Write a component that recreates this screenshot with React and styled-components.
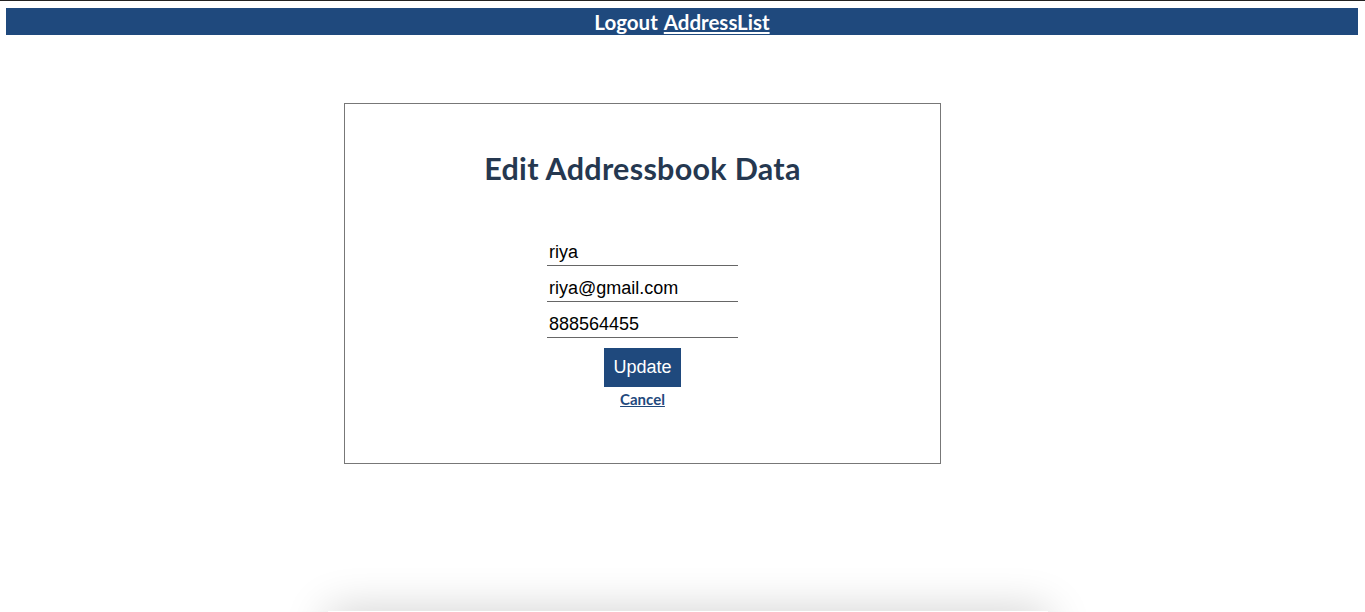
import React from 'react';
import styled, { createGlobalStyle } from 'styled-components';

const GlobalStyle = createGlobalStyle`
  html {
    border-top: 1px solid #222;
  }
  body {
    margin: 7px 7px 0 6px;
    background: #fff;
    font-family: Lato, "Open Sans", sans-serif;
    overflow: hidden;
  }
`;

const NavBar = styled.nav`
  height: 27px;
  background-color: #1f497d;
  display: flex;
  justify-content: center;
  align-items: center;
  gap: 6px;
  font-family: Lato, sans-serif;
  font-size: 20.5px;
  font-weight: 700;
  color: #fff;
`;

const NavLink = styled.a`
  color: #fff;
  text-decoration: ${({ underline }) => (underline ? 'underline' : 'none')};
  text-underline-offset: 2px;
  cursor: pointer;
`;

const Card = styled.div`
  width: 595px;
  height: 359px;
  margin: 68px 0 0 338px;
  border: 1px solid #777;
  display: flex;
  flex-direction: column;
  align-items: center;
`;

const Heading = styled.h2`
  margin: 46px 0 0;
  font-family: Lato, sans-serif;
  font-size: 30.5px;
  font-weight: 700;
  color: #253850;
  letter-spacing: 0.3px;
`;

const Form = styled.form`
  margin-top: 54px;
  display: flex;
  flex-direction: column;
  align-items: center;
`;

const Field = styled.input`
  width: 191px;
  height: 26px;
  margin-bottom: 10px;
  padding: 0 2px;
  box-sizing: border-box;
  border: none;
  border-bottom: 1px solid #666;
  font-family: "Liberation Sans", Arial, sans-serif;
  font-size: 18px;
  color: #000;
  outline: none;
  background: transparent;
`;

const UpdateButton = styled.button`
  width: 77px;
  height: 39px;
  border: none;
  background-color: #1f497d;
  color: #fff;
  font-family: "Liberation Sans", Arial, sans-serif;
  font-size: 18px;
  cursor: pointer;
`;

const CancelLink = styled.a`
  margin-top: 3px;
  font-family: Lato, sans-serif;
  font-size: 15px;
  font-weight: 700;
  color: #1f497d;
  text-decoration: underline;
  cursor: pointer;
`;

const FooterShade = styled.div`
  width: 720px;
  height: 40px;
  margin: 147px 0 0 322px;
  box-shadow: 0 0 45px rgba(0, 0, 0, 0.2);
`;

const App = () => {
  const fields = ['riya', 'riya@gmail.com', '888564455'];

  return (
    <>
      <GlobalStyle />
      <NavBar>
        <NavLink>Logout</NavLink>
        <NavLink underline>AddressList</NavLink>
      </NavBar>
      <Card>
        <Heading>Edit Addressbook Data</Heading>
        <Form onSubmit={(e) => e.preventDefault()}>
          {fields.map((value) => (
            <Field key={value} defaultValue={value} />
          ))}
          <UpdateButton type="submit">Update</UpdateButton>
          <CancelLink>Cancel</CancelLink>
        </Form>
      </Card>
      <FooterShade />
    </>
  );
};

export default App;
